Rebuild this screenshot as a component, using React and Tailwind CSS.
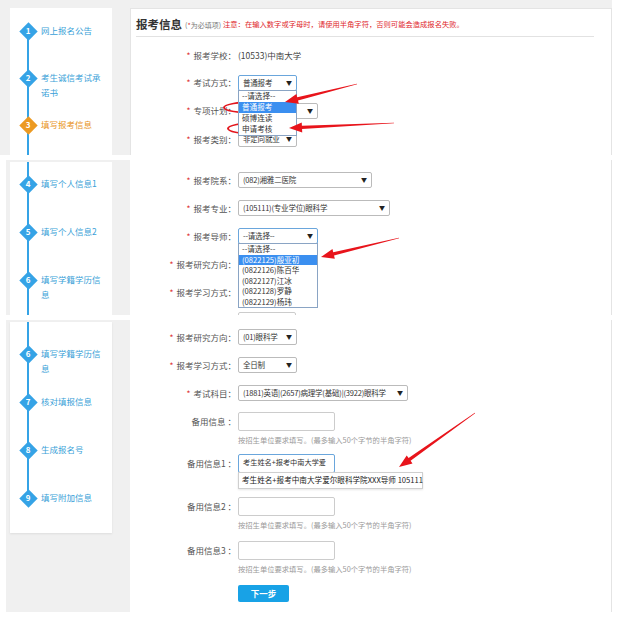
import React from 'react'

const BLUE = 'bg-[#35a3e6]'

// sidebar step with a diamond number badge
const Step = ({ n, label, active, h }) => (
  <div className={`flex items-start ${h}`}>
    <div className="relative z-10 flex h-[18px] w-[18px] shrink-0 items-center justify-center">
      <div className={`absolute h-[13px] w-[13px] rotate-45 ${active ? 'bg-[#ec9a22]' : BLUE}`} />
      <span className="relative text-[8px] font-bold leading-none text-white">{n}</span>
    </div>
    <div className={`ml-[4px] mt-[1px] w-[62px] text-[8.5px] leading-[15px] ${active ? 'text-[#e8931c]' : 'text-[#3a9fd8]'}`}>
      {label}
    </div>
  </div>
)

const Label = ({ req, text, w = 'w-[106px]' }) => (
  <div className={`${w} shrink-0 whitespace-nowrap text-right text-[8.5px] leading-none text-[#555]`}>
    {req && <span className="mr-[3px] text-[#d33]">*</span>}
    {text}
  </div>
)

const Sel = ({ w, text, focus, children }) => (
  <div className={`relative ml-[2px] flex h-[16px] shrink-0 items-center justify-between rounded-[2px] border bg-white pl-[4px] pr-[4px] ${focus ? 'border-[#6aa6dc]' : 'border-[#bbbbbb]'} ${w}`}>
    <span className="whitespace-nowrap text-[7.5px] leading-none tracking-[-0.2px] text-[#333]">{text}</span>
    <span className="ml-[2px] text-[6px] leading-none text-[#222]">▼</span>
    {children}
  </div>
)

const DropList = ({ items, hi, w, rowH }) => (
  <div className={`absolute left-[-1px] top-full z-20 border border-[#8aa4c4] bg-white ${w}`}>
    {items.map((it, i) => (
      <div key={i} className={`${rowH} flex items-center whitespace-nowrap pl-[3px] text-[7.6px] leading-none ${i === hi ? 'bg-[#3b8ff0] text-white' : 'text-[#333]'}`}>
        {it}
      </div>
    ))}
  </div>
)

const Input = ({ focus, text, children }) => (
  <div className={`relative ml-[2px] flex h-[19px] w-[97px] shrink-0 items-center rounded-[2px] border bg-white pl-[4px] ${focus ? 'border-[#6aa6dc]' : 'border-[#cccccc]'}`}>
    <span className="whitespace-nowrap text-[7.2px] leading-none text-[#333]">{text}</span>
    {children}
  </div>
)

const Help = () => (
  <div className="ml-[108px] whitespace-nowrap text-[7.3px] leading-[10px] text-[#9a9a9a]">
    按招生单位要求填写。(最多输入50个字节的半角字符)
  </div>
)

const arrow = (x1, y1, x2, y2) => {
  const dx = x2 - x1, dy = y2 - y1
  const L = Math.hypot(dx, dy)
  const ux = dx / L, uy = dy / L
  const nx = -uy, ny = ux
  const hl = 13, hw = 5, sw = 1.7
  const bx = x2 - ux * hl, by = y2 - uy * hl
  const p = [
    [x1 + nx * 0.3, y1 + ny * 0.3],
    [bx + nx * sw, by + ny * sw],
    [bx + nx * hw, by + ny * hw],
    [x2, y2],
    [bx - nx * hw, by - ny * hw],
    [bx - nx * sw, by - ny * sw],
    [x1 - nx * 0.3, y1 - ny * 0.3],
  ]
  return p.map(q => q.join(',')).join(' ')
}

export default function App() {
  return (
    <div className="relative h-[618px] w-[618px] overflow-hidden bg-white font-['Noto_Sans_CJK_SC',sans-serif]">
      {/* panel 1 */}
      <div className="flex h-[155px] w-[612px] overflow-hidden bg-[#f0f0f0]">
        <div className="w-[130px] shrink-0 pl-[10px] pt-[8px]">
          <div className="relative h-[200px] w-[102px] bg-white pl-[9px] pt-[14px]">
            <div className="absolute left-[17px] top-[23px] h-[200px] w-[2px] bg-[#35a3e6]" />
            <Step n="1" label="网上报名公告" h="h-[47px]" />
            <Step n="2" label="考生诚信考试承诺书" h="h-[47px]" />
            <Step n="3" label="填写报考信息" active h="h-[47px]" />
          </div>
        </div>
        <div className="mt-[8px] h-[200px] flex-1 border border-[#e4e4e4] bg-white">
          <div className="mx-[5px] mr-[17px] flex h-[28px] items-center whitespace-nowrap border-b border-[#e2e2e2] pt-[5px]">
            <span className="text-[11.5px] font-bold leading-none text-[#333]">报考信息</span>
            <span className="ml-[3px] text-[7px] leading-none text-[#777]">
              (<span className="text-[#d33]">*</span>为必填项)
            </span>
            <span className="ml-[2px] text-[7.3px] leading-none text-[#e0262b]">
              注意：在输入数字或字母时，请使用半角字符，否则可能会造成报名失败。
            </span>
          </div>
          <div className="mt-[4px]">
            <div className="flex h-[28px] items-center">
              <Label req text="报考学校：" w="w-[105px]" />
              <span className="ml-[2px] text-[8.5px] leading-none text-[#444]">(10533)中南大学</span>
            </div>
            <div className="flex h-[27px] items-center">
              <Label req text="考试方式：" w="w-[105px]" />
              <Sel w="w-[59px]" text="普通报考" focus>
                <DropList items={['--请选择--', '普通报考', '硕博连读', '申请考核']} hi={1} w="w-[59px]" rowH="h-[11px]" />
              </Sel>
            </div>
            <div className="flex h-[29px] items-center">
              <Label req text="专项计划：" w="w-[105px]" />
              <Sel w="w-[80px]" text="" />
            </div>
            <div className="flex h-[28px] items-center">
              <Label req text="报考类别：" w="w-[105px]" />
              <Sel w="w-[59px]" text="非定向就业" />
            </div>
          </div>
        </div>
      </div>

      {/* panel 2 */}
      <div className="ml-[6px] mt-[5px] flex h-[155px] w-[606px] overflow-hidden bg-[#f0f0f0]">
        <div className="w-[124px] shrink-0 pl-[4px] pt-[2px]">
          <div className="relative h-[200px] w-[102px] bg-white pl-[9px] pt-[13px]">
            <div className="absolute left-[17px] top-0 h-[200px] w-[2px] bg-[#35a3e6]" />
            <Step n="4" label="填写个人信息1" h="h-[48px]" />
            <Step n="5" label="填写个人信息2" h="h-[48px]" />
            <Step n="6" label="填写学籍学历信息" h="h-[48px]" />
          </div>
        </div>
        <div className="flex-1 border-r border-[#e4e4e4] bg-white pt-[6px]">
          <div className="flex h-[28px] items-center">
            <Label req text="报考院系：" />
            <Sel w="w-[134px]" text="(082)湘雅二医院" />
          </div>
          <div className="flex h-[28px] items-center">
            <Label req text="报考专业：" />
            <Sel w="w-[152px]" text="(105111)(专业学位)眼科学" />
          </div>
          <div className="flex h-[28px] items-center">
            <Label req text="报考导师：" />
            <Sel w="w-[80px]" text="--请选择--" focus>
              <DropList
                items={['--请选择--', '(0822125)殷亚初', '(0822126)陈百华', '(0822127)江冰', '(0822128)罗静', '(0822129)杨玮']}
                hi={1}
                w="w-[80px]"
                rowH="h-[10.5px]"
              />
            </Sel>
          </div>
          <div className="flex h-[28px] items-center">
            <Label req text="报考研究方向：" />
          </div>
          <div className="flex h-[28px] items-center">
            <Label req text="报考学习方式：" />
          </div>
          <div className="flex h-[28px] items-center">
            <Label text="" />
            <div className="ml-[2px] h-[16px] w-[58px] rounded-[2px] border border-[#cccccc] bg-white" />
          </div>
        </div>
      </div>

      {/* panel 3 */}
      <div className="ml-[6px] mt-[5px] flex h-[292px] w-[606px] bg-[#f0f0f0]">
        <div className="w-[124px] shrink-0 pl-[4px] pt-[2px]">
          <div className="relative h-[211px] w-[102px] bg-white pl-[9px] pt-[23px] shadow-[0_1px_2px_rgba(0,0,0,0.08)]">
            <div className="absolute left-[17px] top-0 h-[175px] w-[2px] bg-[#35a3e6]" />
            <Step n="6" label="填写学籍学历信息" h="h-[48px]" />
            <Step n="7" label="核对填报信息" h="h-[48px]" />
            <Step n="8" label="生成报名号" h="h-[48px]" />
            <Step n="9" label="填写附加信息" h="h-[48px]" />
          </div>
        </div>
        <div className="flex-1 border-r border-[#e4e4e4] bg-white pt-[3px]">
          <div className="flex h-[28px] items-center">
            <Label req text="报考研究方向：" />
            <Sel w="w-[59px]" text="(01)眼科学" />
          </div>
          <div className="flex h-[28px] items-center">
            <Label req text="报考学习方式：" />
            <Sel w="w-[59px]" text="全日制" />
          </div>
          <div className="flex h-[28px] items-center">
            <Label req text="考试科目：" />
            <Sel w="w-[170px]" text="(1881)英语|(2657)病理学(基础)|(3922)眼科学" />
          </div>
          <div className="flex h-[28px] items-center">
            <Label text="备用信息 ：" />
            <Input />
          </div>
          <Help />
          <div className="mt-[4px] flex h-[28px] items-center">
            <Label text="备用信息1 ：" />
            <Input focus text="考生姓名+报考中南大学爱">
              <div className="absolute left-[-1px] top-full z-20 flex h-[17px] w-[185px] items-center whitespace-nowrap border border-[#cfcfcf] bg-white pl-[3px] text-[7.6px] leading-none text-[#222] shadow-[0_1px_2px_rgba(0,0,0,0.1)]">
                考生姓名+报考中南大学爱尔眼科学院XXX导师 105111
              </div>
            </Input>
          </div>
          <div className="mt-[15px] flex h-[28px] items-center">
            <Label text="备用信息2 ：" />
            <Input />
          </div>
          <Help />
          <div className="mt-[6px] flex h-[28px] items-center">
            <Label text="备用信息3 ：" />
            <Input />
          </div>
          <Help />
          <div className="ml-[108px] mt-[11px] flex h-[17px] w-[51px] items-center justify-center rounded-[2px] bg-[#18a2e6] text-[8.5px] font-bold leading-none text-white">
            下一步
          </div>
        </div>
      </div>

      {/* annotations */}
      <div className="pointer-events-none absolute left-[223px] top-[101px] h-[13px] w-[63px] rounded-[50%] border-2 border-[#e3161d]" />
      <div className="pointer-events-none absolute left-[227px] top-[122px] h-[13px] w-[57px] rounded-[50%] border-2 border-[#e3161d]" />
      <svg className="pointer-events-none absolute inset-0 z-30" width="618" height="618">
        <polygon points={arrow(357, 84, 285, 102)} fill="#e8141b" />
        <polygon points={arrow(394, 123, 289, 128)} fill="#e8141b" />
        <polygon points={arrow(399, 238, 321, 257)} fill="#e8141b" />
        <polygon points={arrow(475, 413, 399, 467)} fill="#e8141b" />
      </svg>
    </div>
  )
}
